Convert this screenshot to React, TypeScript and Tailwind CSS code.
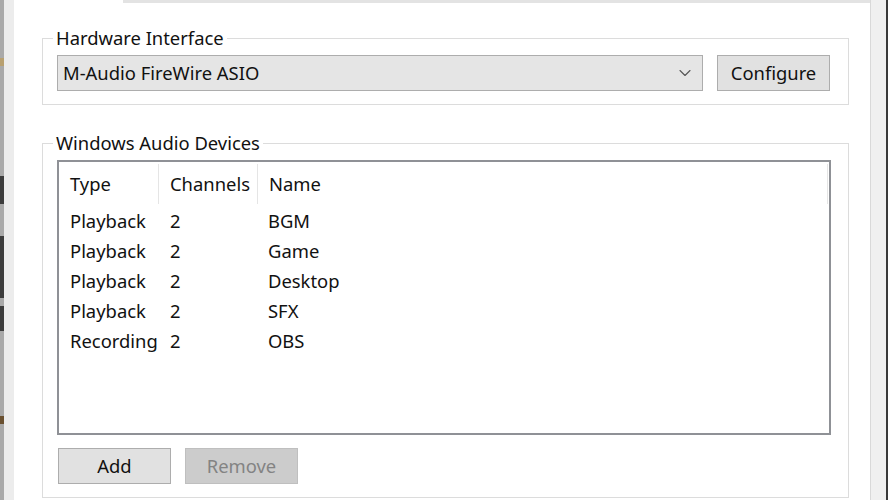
import { ChevronDown } from 'lucide-react';

const FONT = "font-['Segoe_UI','Noto_Sans',sans-serif]";

const DEVICES = [
  { type: 'Playback', channels: '2', name: 'BGM' },
  { type: 'Playback', channels: '2', name: 'Game' },
  { type: 'Playback', channels: '2', name: 'Desktop' },
  { type: 'Playback', channels: '2', name: 'SFX' },
  { type: 'Recording', channels: '2', name: 'OBS' },
];

// Column widths of the list view, the Name column takes the rest
const COLS = ['w-[100px]', 'w-[99px]', 'w-[570px]'];

function Button({ label, disabled }: { label: string; disabled?: boolean }) {
  return (
    <button
      disabled={disabled}
      className={
        disabled
          ? 'h-[36px] w-[113px] border border-[#bfbfbf] bg-[#cccccc] text-[#838383]'
          : 'h-[36px] w-[113px] border border-[#adadad] bg-[#e1e1e1] text-[#111]'
      }
    >
      {label}
    </button>
  );
}

function GroupBox({ title, className, children }: { title: string; className?: string; children: React.ReactNode }) {
  return (
    <fieldset className={`w-[807px] border border-[#dcdcdc] pt-[5px] pb-[13px] ${className ?? ''}`}>
      <legend className="ml-[10px] px-[3px] leading-[24px] text-[#111]">{title}</legend>
      <div className="px-[14px]">{children}</div>
    </fieldset>
  );
}

export default function App() {
  return (
    <div className={`flex h-[500px] w-[888px] overflow-hidden bg-[#f0f0f0] text-[18.4px] ${FONT}`}>
      {/* window behind, left edge */}
      <div className="flex w-[4px] flex-col bg-[#a9a9a9]">
        <div className="h-[58px]" />
        <div className="h-[8px] bg-[#b8a070]" />
        <div className="h-[110px]" />
        <div className="h-[28px] bg-[#3c3c3c]" />
        <div className="h-[32px]" />
        <div className="h-[62px] bg-[#3c3c3c]" />
        <div className="h-[8px]" />
        <div className="h-[25px] bg-[#3c3c3c]" />
        <div className="h-[85px]" />
        <div className="h-[8px] bg-[#6a5030]" />
      </div>
      <div className="w-[10px] bg-[#ececec]" />

      {/* tab page */}
      <div className="flex w-[857px] flex-col border-r border-[#d9d9d9] bg-white">
        <div className="flex h-[3px] shrink-0">
          <div className="w-[109px]" />
          <div className="flex-1 bg-[#e3e3e3]" />
        </div>
        <div className="flex flex-col pl-[28px]">
          <GroupBox title="Hardware Interface" className="mt-[23px]">
            <div className="flex gap-[14px]">
              <div className="flex h-[36px] w-[646px] items-center justify-between border border-[#adadad] bg-[#e5e5e5] pl-[5px] pr-[7px] text-[#111]">
                <span>M-Audio FireWire ASIO</span>
                <ChevronDown className="h-[20px] w-[20px] text-[#555]" strokeWidth={1.3} />
              </div>
              <Button label="Configure" />
            </div>
          </GroupBox>

          <GroupBox title="Windows Audio Devices" className="mt-[26px]">
            <div className="h-[275px] w-[774px] border-2 border-[#8f9196] bg-white text-[#111]">
              <div className="flex h-[44px] items-center">
                {['Type', 'Channels', 'Name'].map((h, i) => (
                  <div key={h} className={`flex h-[40px] items-center border-r border-[#e5e5e5] pl-[11px] ${COLS[i]}`}>
                    {h}
                  </div>
                ))}
              </div>
              {DEVICES.map((d, index) => (
                <div key={index} className="flex h-[30px] items-center">
                  <div className={`pl-[11px] ${COLS[0]}`}>{d.type}</div>
                  <div className={`pl-[11px] ${COLS[1]}`}>{d.channels}</div>
                  <div className={`pl-[10px] ${COLS[2]}`}>{d.name}</div>
                </div>
              ))}
            </div>
            <div className="mt-[13px] flex gap-[14px] pl-[1px]">
              <Button label="Add" />
              <Button label="Remove" disabled />
            </div>
          </GroupBox>
        </div>
      </div>

      {/* window frame on the right */}
      <div className="w-[15px] bg-[#f0f0f0]" />
      <div className="w-[2px] bg-[#3a3a3a]" />
      <div className="flex-1 bg-[#e6e6e6]" />
    </div>
  );
}
